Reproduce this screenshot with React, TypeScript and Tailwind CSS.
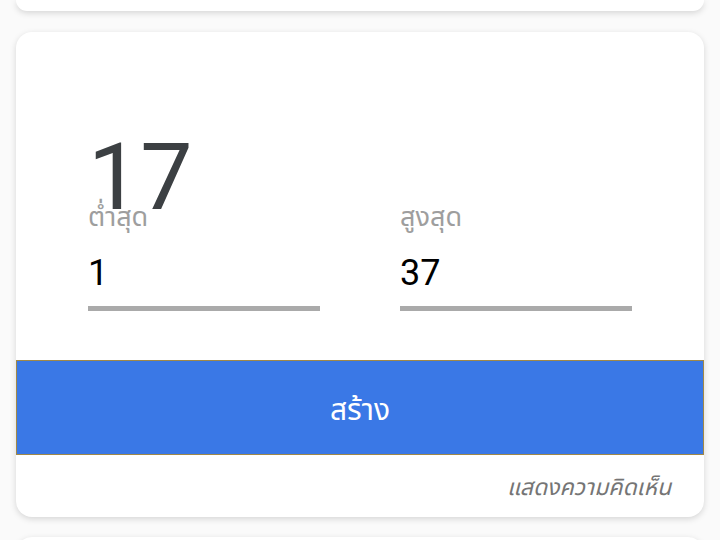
import React from "react";

export default function App() {
  const font = { fontFamily: 'Roboto, "Noto Sans", "Noto Sans Thai", sans-serif' };
  return (
    <div className="w-[720px] h-[540px] overflow-hidden bg-[#fafafa]" style={font}>
      <div className="mx-[16px] h-[11px] bg-white rounded-b-[16px] shadow-[0_2px_6px_rgba(0,0,0,0.15)]" />
      <div className="mx-[16px] mt-[21px] bg-white rounded-[16px] shadow-[0_2px_6px_rgba(0,0,0,0.15)] overflow-hidden">
        <div className="pt-[99px] px-[72px]">
          <div className="h-[70px] text-[93px] leading-none text-[#3c4043] whitespace-nowrap">17</div>
          <div className="grid grid-cols-2 gap-x-[80px]">
            <div className="flex flex-col">
              <div className="text-[27px] leading-[32px] text-[#9e9e9e]">ต่ำสุด</div>
              <div className="mt-[18px] text-[36px] leading-[44px] text-black">1</div>
              <div className="mt-[11px] h-[5px] bg-[#aaaaaa]" />
            </div>
            <div className="flex flex-col">
              <div className="text-[27px] leading-[32px] text-[#9e9e9e]">สูงสุด</div>
              <div className="mt-[18px] text-[36px] leading-[44px] text-black">37</div>
              <div className="mt-[11px] h-[5px] bg-[#aaaaaa]" />
            </div>
          </div>
        </div>
        <button className="mt-[49px] w-full h-[95px] pt-[3px] bg-[#3a78e6] border border-[#a08848] text-white text-[30px] flex items-center justify-center">
          สร้าง
        </button>
        <div className="h-[62px] pt-[5px] flex items-center justify-end pr-[33px]">
          <span className="italic text-[23px] text-[#757575]">แสดงความคิดเห็น</span>
        </div>
      </div>
      <div className="mx-[16px] mt-[20px] h-[40px] bg-white rounded-t-[16px] shadow-[0_2px_6px_rgba(0,0,0,0.15)]" />
    </div>
  );
}
